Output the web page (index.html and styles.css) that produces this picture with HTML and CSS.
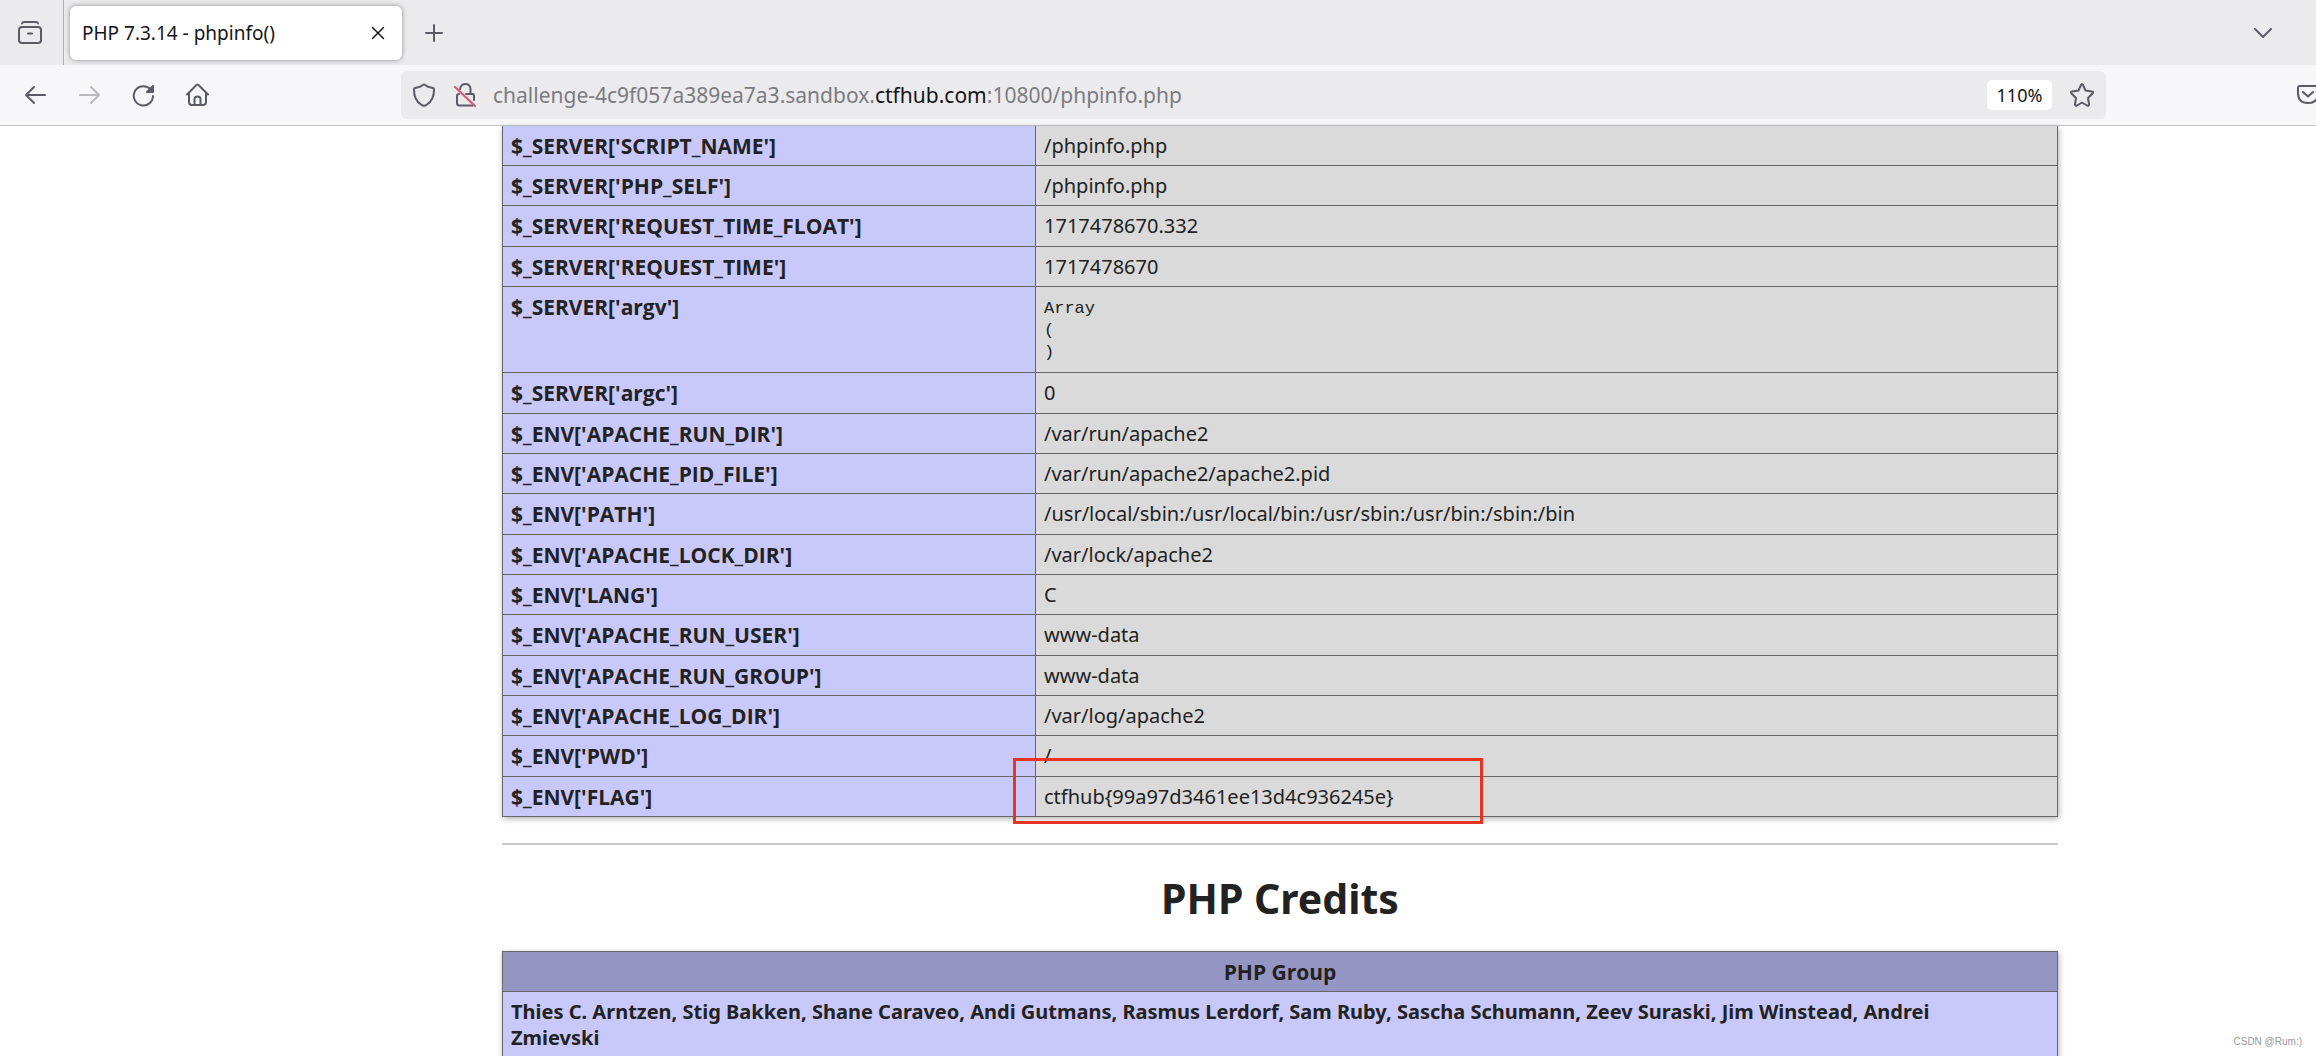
FILE: index.html
```html
<!DOCTYPE html>
<html lang="en">
<head>
<meta charset="utf-8">
<title>PHP 7.3.14 - phpinfo()</title>
<link rel="stylesheet" href="styles.css">
</head>
<body>
<header class="browser">
  <div class="tabstrip">
    <div class="view-cell">
      <button class="icon-btn" aria-label="View recent browsing"><svg width="26" height="26" viewBox="0 0 26 26"><path d="M5 3.500Q5.500 2 7 2H19Q20.500 2 21 3.500"/><rect x="2" y="7" width="22" height="16" rx="3"/><path d="M11 13.500H15"/></svg></button>
    </div>
    <div class="tab">
      <span class="tab-title">PHP 7.3.14 - phpinfo()</span>
      <button class="icon-btn close" aria-label="Close tab"><svg width="14" height="14" viewBox="0 0 14 14"><path d="M1.500 1.500L12.500 12.500M12.500 1.500L1.500 12.500"/></svg></button>
    </div>
    <button class="icon-btn new-tab" aria-label="New tab"><svg width="20" height="20" viewBox="0 0 20 20"><path d="M10 2V18M2 10H18"/></svg></button>
    <button class="icon-btn list-tabs" aria-label="List all tabs"><svg width="20" height="12" viewBox="0 0 20 12"><path d="M2 2L10 10L18 2"/></svg></button>
  </div>
  <nav class="toolbar">
    <div class="nav-buttons">
      <button class="icon-btn" aria-label="Back"><svg width="24" height="24" viewBox="0 0 24 24"><path d="M21 12H2M10 4L2 12L10 20"/></svg></button>
      <button class="icon-btn" aria-label="Forward" disabled><svg width="24" height="24" viewBox="0 0 24 24"><path d="M2 12H21M13 4L21 12L13 20"/></svg></button>
      <button class="icon-btn" aria-label="Reload"><svg width="24" height="24" viewBox="0 0 24 24"><path d="M21 13A9.600 9.600 0 1 1 17 5"/><path class="solid" d="M21 3V9H15Z"/></svg></button>
      <button class="icon-btn" aria-label="Home"><svg width="24" height="24" viewBox="0 0 24 24"><path d="M1 11.500L10.500 2Q11.500 1 12.500 2L22 11.500M3 10V19Q3 22 6 22H17Q20 22 20 19V10M8.500 22V16Q8.500 13.500 11.500 13.500T14.500 16V22"/></svg></button>
    </div>
    <div class="urlbar">
      <svg width="24" height="26" viewBox="0 0 24 26"><path d="M11 3Q12 2 13 3Q16 5.500 21 6Q22 6 22 8Q22 18 15 22.500Q12 25 9 22.500Q2 18 2 8Q2 6 3 6Q8 5.500 11 3Z"/></svg>
      <svg class="lock" width="24" height="26" viewBox="0 0 24 26"><path d="M6 7Q7 2 11.500 2T16.500 7V12H19Q20 12.500 20 14V18M5 12Q3 12 3 14V21Q3 23.500 5.500 23.500H19M12 12H16"/><path class="strike" d="M1 5L21 24"/></svg>
      <div class="url">challenge-4c9f057a389ea7a3.sandbox.<b>ctfhub.com</b>:10800/phpinfo.php</div>
      <button class="zoom-level">110%</button>
      <button class="icon-btn" aria-label="Bookmark this page"><svg width="26" height="26" viewBox="0 0 26 26"><path d="M12 3Q13 1 14 3L16.500 8.500L23 9.500Q25 10 23.500 11.500L19 16L20 22Q20 24.500 18 23.500L13 20.500L8 23.500Q6 24.500 6 22L7 16L2.500 11.500Q1 10 3 9.500L9.500 8.500Z"/></svg></button>
    </div>
    <button class="icon-btn pocket" aria-label="Save to Pocket"><svg width="22" height="22" viewBox="0 0 22 22"><path d="M3 2H19Q21 2 21 4V9Q21 19 11 19T1 9V4Q1 2 3 2ZM6 8L11 12.500L16 8"/></svg></button>
  </nav>
</header>
<main class="page">
  <table class="info">
    <tbody>
    <tr><th scope="row">$_SERVER['SCRIPT_NAME']</th><td>/phpinfo.php</td></tr>
    <tr><th scope="row">$_SERVER['PHP_SELF']</th><td>/phpinfo.php</td></tr>
    <tr><th scope="row">$_SERVER['REQUEST_TIME_FLOAT']</th><td>1717478670.332</td></tr>
    <tr><th scope="row">$_SERVER['REQUEST_TIME']</th><td>1717478670</td></tr>
    <tr class="tall"><th scope="row">$_SERVER['argv']</th><td><pre>Array
(
)</pre></td></tr>
    <tr><th scope="row">$_SERVER['argc']</th><td>0</td></tr>
    <tr><th scope="row">$_ENV['APACHE_RUN_DIR']</th><td>/var/run/apache2</td></tr>
    <tr><th scope="row">$_ENV['APACHE_PID_FILE']</th><td>/var/run/apache2/apache2.pid</td></tr>
    <tr><th scope="row">$_ENV['PATH']</th><td>/usr/local/sbin:/usr/local/bin:/usr/sbin:/usr/bin:/sbin:/bin</td></tr>
    <tr><th scope="row">$_ENV['APACHE_LOCK_DIR']</th><td>/var/lock/apache2</td></tr>
    <tr><th scope="row">$_ENV['LANG']</th><td>C</td></tr>
    <tr><th scope="row">$_ENV['APACHE_RUN_USER']</th><td>www-data</td></tr>
    <tr><th scope="row">$_ENV['APACHE_RUN_GROUP']</th><td>www-data</td></tr>
    <tr><th scope="row">$_ENV['APACHE_LOG_DIR']</th><td>/var/log/apache2</td></tr>
    <tr><th scope="row">$_ENV['PWD']</th><td>/</td></tr>
    <tr><th scope="row">$_ENV['FLAG']</th><td class="flag">ctfhub{99a97d3461ee13d4c936245e}<span class="marker"></span></td></tr>
    </tbody>
  </table>
  <hr>
  <h1>PHP Credits</h1>
  <table class="credits">
    <thead><tr><th>PHP Group</th></tr></thead>
    <tbody><tr><td>Thies C. Arntzen, Stig Bakken, Shane Caraveo, Andi Gutmans, Rasmus Lerdorf, Sam Ruby, Sascha Schumann, Zeev Suraski, Jim Winstead, Andrei Zmievski</td></tr></tbody>
  </table>
</main>
<div class="watermark">CSDN @Rum:)</div>
</body>
</html>
```
FILE: styles.css
```css
* { box-sizing: border-box; }

body {
  margin: 0;
  height: 100vh;
  overflow: hidden;
  position: relative;
  background: #fff;
  color: #222;
  font: 20px/26px "Noto Sans", "Open Sans", sans-serif;
}

svg {
  display: block;
  flex: none;
  fill: none;
  stroke: #5b5b66;
  stroke-width: 2;
  stroke-linecap: round;
  stroke-linejoin: round;
}

svg .solid { fill: #5b5b66; }
svg .strike { stroke: #e2506a; }

button {
  border: 0;
  padding: 0;
  background: none;
  font: inherit;
  color: inherit;
}

.icon-btn:disabled { opacity: 0.4; }

/* Browser chrome */
.browser { border-bottom: 1px solid #c4c4c6; }

.tabstrip {
  display: flex;
  align-items: center;
  height: 65px;
  background: #ebebed;
}

.view-cell {
  display: flex;
  align-items: center;
  align-self: stretch;
  width: 64px;
  padding-left: 17px;
  border-right: 1px solid #b0b0b4;
}

.tab {
  display: flex;
  align-items: center;
  justify-content: space-between;
  width: 332px;
  height: 54px;
  margin-left: 6px;
  padding: 0 17px 0 12px;
  border-radius: 6px;
  background: #fff;
  box-shadow: 0 0 5px rgba(0, 0, 0, 0.4);
  color: #15141a;
  font-size: 19px;
}

.close svg { stroke: #15141a; stroke-width: 1.5; }
.new-tab { margin-left: 22px; }
.list-tabs { margin: 0 43px 0 auto; }

.toolbar {
  display: flex;
  align-items: center;
  height: 60px;
  background: #f7f7f9;
}

.nav-buttons {
  display: flex;
  gap: 30px;
  width: 401px;
  padding-left: 24px;
}

.urlbar {
  display: flex;
  align-items: center;
  flex: 1;
  height: 48px;
  padding: 0 11px;
  border-radius: 6px;
  background: #ebebed;
}

.lock { margin-left: 18px; }

.url {
  flex: 1;
  margin-left: 15px;
  color: #7b7b80;
  font-size: 21px;
}

.url b { color: #15141a; font-weight: 400; }

.zoom-level {
  width: 65px;
  height: 30px;
  margin-right: 17px;
  border-radius: 5px;
  background: #fff;
  color: #15141a;
  font-size: 18px;
}

.pocket {
  width: 19px;
  margin-left: 191px;
  overflow: hidden;
}

/* phpinfo page */
.page { padding: 0 258px 0 502px; }

table {
  width: 100%;
  border-collapse: collapse;
  box-shadow: 1px 2px 6px rgba(0, 0, 0, 0.3);
}

th, td {
  height: 40px;
  padding: 7px 8px 6px;
  border: 1px solid #666;
  vertical-align: top;
  text-align: left;
}

th { font-family: "Open Sans", sans-serif; font-size: 21px; }

.info th { width: 533px; background: #c8c8fa; }
.info td { background: #dadada; }
.info tr:nth-child(3n) > * { height: 41px; }
.info tr:first-child > * { height: 39px; border-top: 0; }
.info .tall > * { height: 86px; }

pre {
  margin: 4px 0 0;
  font: 17px/22px "Liberation Mono", monospace;
}

.flag { position: relative; }

.marker {
  position: absolute;
  left: -23px;
  top: -19px;
  width: 470px;
  height: 66px;
  border: 3px solid #e83323;
}

hr {
  height: 2px;
  margin: 26px 0 0;
  border: 0;
  background: #c8c8c8;
}

h1 {
  margin: 26px 0;
  font-size: 41px;
  line-height: 54px;
  text-align: center;
}

.credits th { background: #9696c5; text-align: center; }

.credits td {
  height: 90px;
  padding-right: 64px;
  background: #c8c8fa;
  font-weight: 700;
}

.watermark {
  position: absolute;
  right: 14px;
  bottom: 6px;
  color: #999;
  font: 10px/16px "Liberation Sans", sans-serif;
}
```
